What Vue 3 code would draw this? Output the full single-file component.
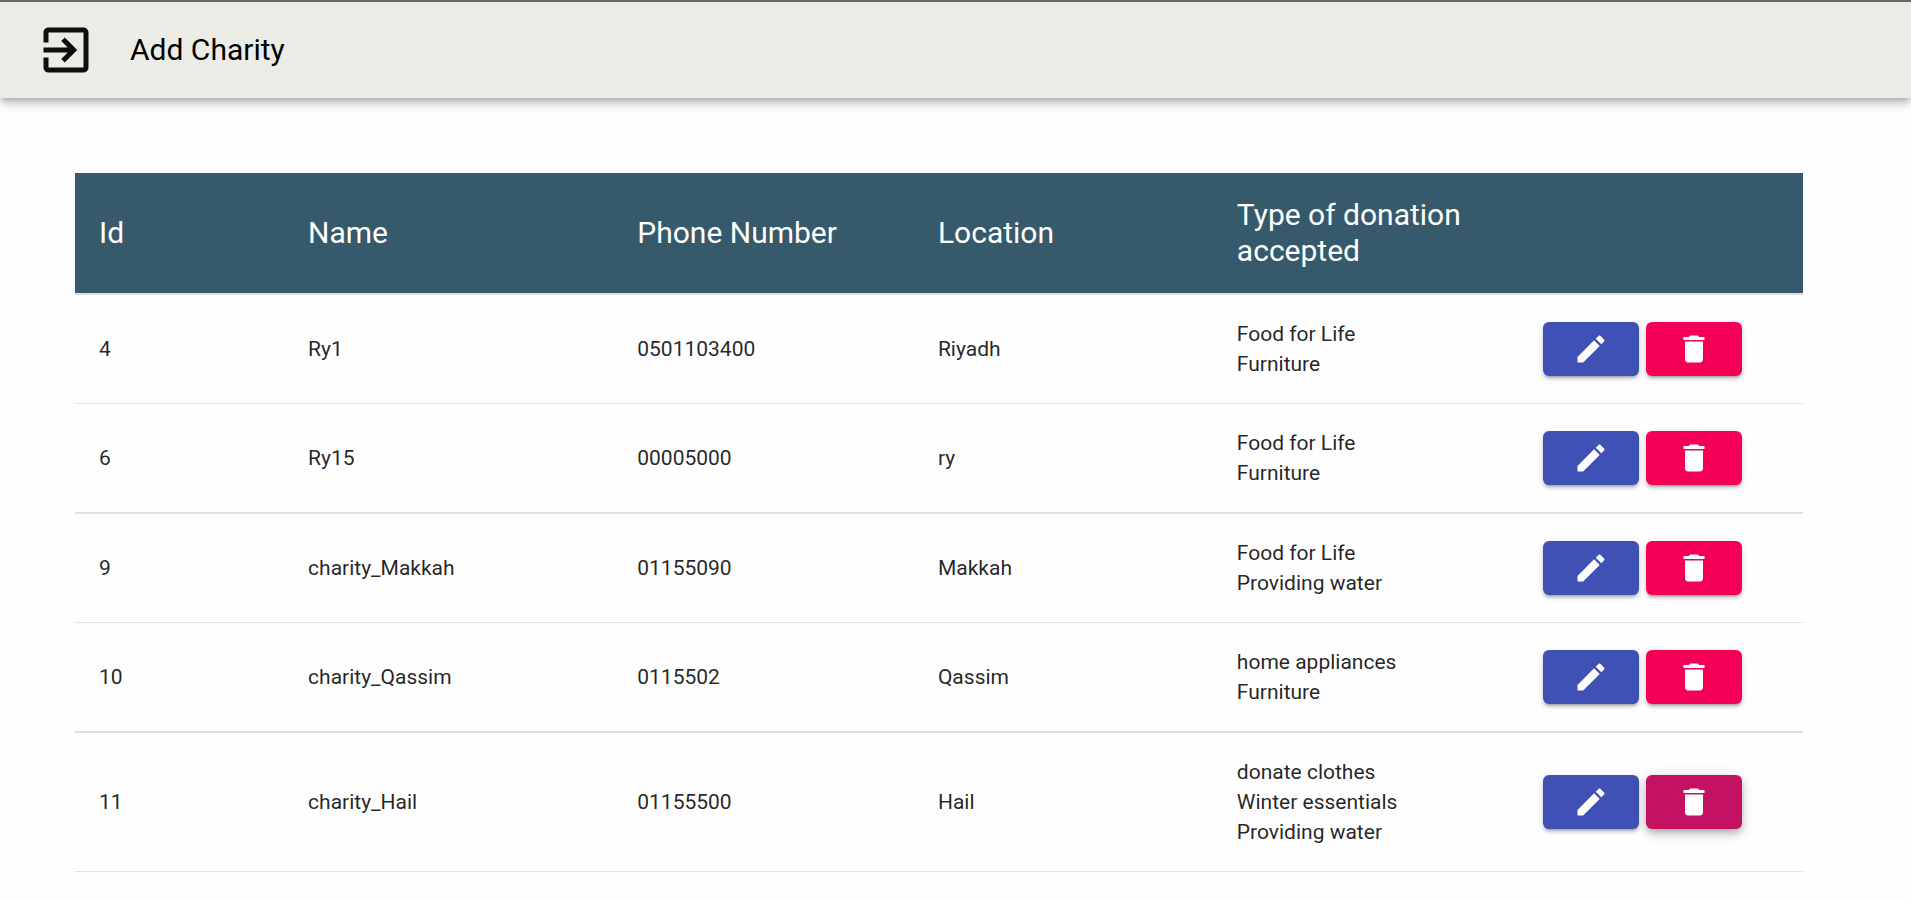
<script setup>
const charities = [
  { id: 4, name: 'Ry1', phone: '0501103400', location: 'Riyadh', types: ['Food for Life', 'Furniture'] },
  { id: 6, name: 'Ry15', phone: '00005000', location: 'ry', types: ['Food for Life', 'Furniture'] },
  { id: 9, name: 'charity_Makkah', phone: '01155090', location: 'Makkah', types: ['Food for Life', 'Providing water'] },
  { id: 10, name: 'charity_Qassim', phone: '0115502', location: 'Qassim', types: ['home appliances', 'Furniture'] },
  { id: 11, name: 'charity_Hail', phone: '01155500', location: 'Hail', types: ['donate clothes', 'Winter essentials', 'Providing water'], active: true }
]
</script>

<template>
  <div class="page">
    <header class="app-bar">
      <button class="exit" type="button" aria-label="Exit">
        <svg viewBox="0 0 24 24" aria-hidden="true">
          <path d="M10.09 15.59L11.5 17l5-5-5-5-1.41 1.41L12.67 11H3v2h9.67l-2.58 2.59zM19 3H5c-1.11 0-2 .9-2 2v4h2V5h14v14H5v-4H3v4c0 1.1.89 2 2 2h14c1.1 0 2-.9 2-2V5c0-1.1-.9-2-2-2z" />
        </svg>
      </button>
      <a class="add" href="#">Add Charity</a>
    </header>

    <main class="content">
      <table class="charities">
        <colgroup>
          <col class="c-id" />
          <col class="c-name" />
          <col class="c-phone" />
          <col class="c-location" />
          <col class="c-type" />
          <col />
        </colgroup>
        <thead>
          <tr>
            <th scope="col">Id</th>
            <th scope="col">Name</th>
            <th scope="col">Phone Number</th>
            <th scope="col">Location</th>
            <th scope="col">Type of donation accepted</th>
            <td></td>
          </tr>
        </thead>
        <tbody>
          <tr v-for="c in charities" :key="c.id">
            <td>{{ c.id }}</td>
            <td>{{ c.name }}</td>
            <td>{{ c.phone }}</td>
            <td>{{ c.location }}</td>
            <td>
              <div v-for="t in c.types" :key="t">{{ t }}</div>
            </td>
            <td>
              <div class="actions">
                <button class="btn edit" type="button" :aria-label="'Edit ' + c.name">
                  <svg viewBox="0 0 24 24" aria-hidden="true">
                    <path d="M3 17.25V21h3.75L17.81 9.94l-3.75-3.75L3 17.25zM20.71 7.04c.39-.39.39-1.02 0-1.41l-2.34-2.34c-.39-.39-1.02-.39-1.41 0l-1.83 1.83 3.75 3.75 1.83-1.83z" />
                  </svg>
                </button>
                <button class="btn delete" :class="{ active: c.active }" type="button" :aria-label="'Delete ' + c.name">
                  <svg viewBox="0 0 24 24" aria-hidden="true">
                    <path d="M6 19c0 1.1.9 2 2 2h8c1.1 0 2-.9 2-2V7H6v12zM19 4h-3.5l-1-1h-5l-1 1H5v2h14V4z" />
                  </svg>
                </button>
              </div>
            </td>
          </tr>
        </tbody>
      </table>
    </main>
  </div>
</template>

<style>
body {
  background: #fefefe;
}
</style>

<style scoped>
.page {
  font-family: Roboto, "Liberation Sans", sans-serif;
  color: rgba(0, 0, 0, 0.87);
}

.app-bar {
  display: flex;
  align-items: center;
  gap: 34px;
  height: 96px;
  padding: 0 36px;
  border-top: 2px solid #676864;
  background: #ebece6;
  box-shadow: 0 3px 6px -2px rgba(0, 0, 0, 0.2), 0 6px 8px 0 rgba(0, 0, 0, 0.14), 0 2px 15px 0 rgba(0, 0, 0, 0.12);
}

button {
  display: flex;
  align-items: center;
  justify-content: center;
  padding: 0;
  border: 0;
  cursor: pointer;
}

svg {
  display: block;
  fill: currentColor;
}

.exit {
  background: none;
  color: #0e0e0e;
}

.exit svg {
  width: 60px;
  height: 60px;
}

.add {
  font-size: 30px;
  line-height: 48px;
  color: #000;
  text-decoration: none;
}

.content {
  padding: 75px 108px 27px 75px;
}

.charities {
  width: 100%;
  table-layout: fixed;
  border-collapse: separate;
  border-spacing: 0;
}

.c-id { width: 12.1%; }
.c-name { width: 19.05%; }
.c-phone { width: 17.4%; }
.c-location { width: 17.3%; }
.c-type { width: 17.7%; }

th,
td {
  padding: 24px;
  text-align: left;
  vertical-align: middle;
  border-bottom: 1px solid #e0e0e0;
}

thead th,
thead td {
  background: #365a6b;
  background-clip: padding-box;
  border-bottom-width: 2px;
  color: #fff;
  font-size: 30px;
  font-weight: 400;
  line-height: 36px;
}

tbody td {
  font-size: 21px;
  line-height: 30px;
}

tbody tr:nth-child(even) td {
  border-bottom-width: 2px;
}

.actions {
  display: flex;
  gap: 7px;
}

.btn {
  width: 96px;
  height: 54px;
  border-radius: 6px;
  color: #fff;
  box-shadow: 0 4px 2px -3px rgba(0, 0, 0, 0.2), 0 3px 3px 0 rgba(0, 0, 0, 0.14), 0 2px 7px 0 rgba(0, 0, 0, 0.12);
}

.btn svg {
  width: 36px;
  height: 36px;
}

.edit {
  background: #3f51b5;
}

.delete {
  background: #f50057;
}

.delete.active,
.delete:hover {
  background: #c51162;
  box-shadow: 0 3px 6px -2px rgba(0, 0, 0, 0.2), 0 6px 8px 0 rgba(0, 0, 0, 0.14), 0 2px 15px 0 rgba(0, 0, 0, 0.12);
}
</style>
